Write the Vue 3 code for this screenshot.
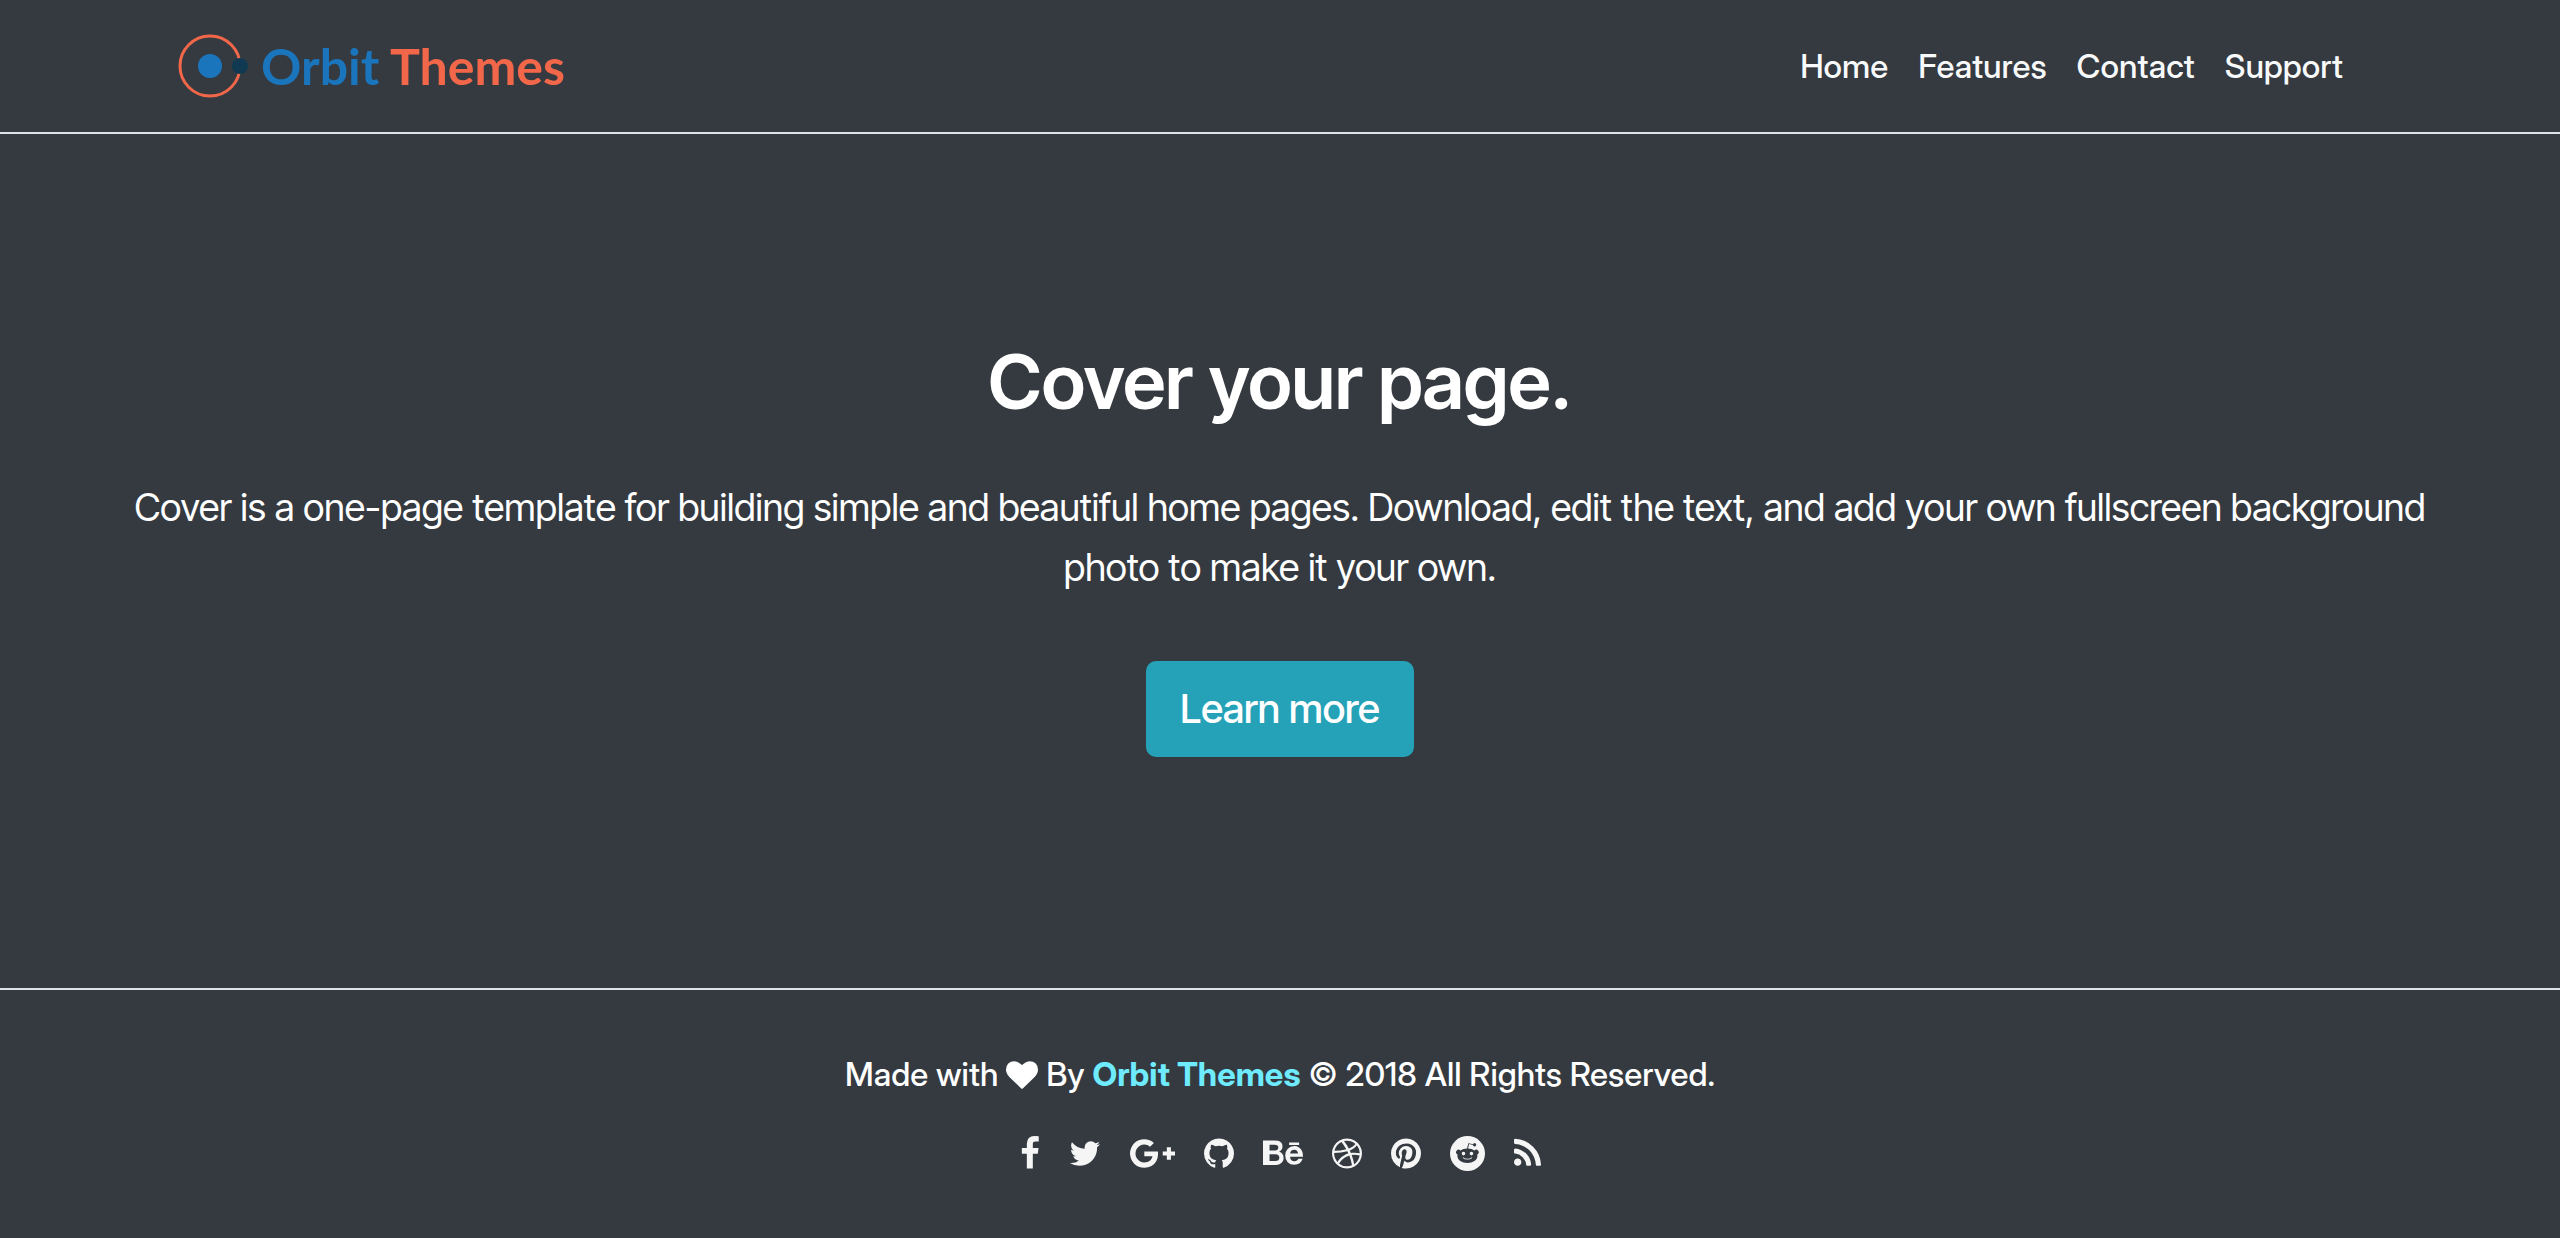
<script setup>
const links = ['Home', 'Features', 'Contact', 'Support']

const icons = [
  { name: 'Facebook', width: 20, box: '384 0 1024 1792', d: 'M1343 12v264h-157q-86 0-116 36t-30 108v189h293l-39 296h-254v759h-306v-759h-255v-296h255v-218q0-186 104-288.500t277-102.500q147 0 228 12z' },
  { name: 'Twitter', width: 32, box: '64 0 1664 1792', d: 'M1684 408q-67 98-162 167 1 14 1 42 0 130-38 259.500t-115.500 248.500-184.500 210.500-258 146-323 54.500q-271 0-496-145 35 4 78 4 225 0 401-138-105-2-188-64.500t-114-159.500q33 5 61 5 43 0 85-11-112-23-185.500-111.500t-73.500-205.500v-4q68 38 146 41-66-44-105-115t-39-154q0-88 44-163 121 149 294.500 238.500t371.500 99.500q-8-38-8-74 0-134 94.500-228.500t228.500-94.500q140 0 236 102 109-21 205-78-37 115-142 178 93-10 186-50z' },
  { name: 'Google Plus', width: 45, box: '0 0 2304 1792', d: 'M1437 913q0 208-87 370.500t-248 254-369 91.500q-149 0-285-58t-234-156-156-234-58-285 58-285 156-234 234-156 285-58q286 0 491 192l-199 191q-117-113-292-113-123 0-227.500 62t-165.500 168.500-61 232.500 61 232.500 165.500 168.500 227.500 62q83 0 152.500-23t114.500-57.500 78.500-78.500 49-83 21.500-74h-416v-252h692q12 63 12 122zm867-122v210h-209v209h-210v-209h-209v-210h209v-209h210v209h209z' },
  { name: 'GitHub', width: 30, box: '128 0 1536 1792', d: 'M896 128q209 0 385.500 103t279.500 279.500 103 385.500q0 251-146.500 451.500t-378.500 277.500q-27 5-40-7t-13-30q0-3 .5-76.500t.5-134.500q0-97-52-142 57-6 102.500-18t94-39 81-66.500 53-105 20.500-150.500q0-119-79-206 37-91-8-204-28-9-81 11t-92 44l-38 24q-93-26-192-26t-192 26q-16-11-42.500-27t-83.500-38.500-85-13.500q-45 113-8 204-79 87-79 206 0 85 20.500 150t52.500 105 80.500 67 94 39 102.500 18q-39 36-49 103-21 10-45 15t-57 5-65.500-21.500-55.500-62.500q-19-32-48.500-52t-49.500-24l-20-3q-21 0-29 4.500t-5 11.500 9 14 13 12l7 5q22 10 43.500 38t31.500 51l10 23q13 38 44 61.500t67 30 69.500 7 55.500-3.500l23-4q0 38 .5 88.500t.5 54.500q0 18-13 30t-40 7q-232-77-378.500-277.500t-146.500-451.500q0-209 103-385.500t279.500-279.500 385.500-103z' },
  { name: 'Behance', width: 40, box: '0 0 2048 1792', d: 'M1848 339h-511v124h511v-124zm-252 365q-90 0-146 52.500t-62 142.500h408q-18-195-200-195zm16 585q63 0 122-32t76-87h221q-100 307-427 307-214 0-340.500-132t-126.500-347q0-208 130.500-345.500t336.500-137.500q138 0 240.500 68t153 179 50.500 248q0 17-2 47h-658q0 111 57.500 171.500t166.500 60.500zm-1277-14h296q205 0 205-167 0-180-199-180h-302v347zm0-537h281q78 0 123.500-36.500t45.500-113.500q0-144-190-144h-260v294zm-335-509h594q87 0 155 14t126.500 47.500 90 96.500 31.500 154q0 181-172 263 114 32 172 115t58 204q0 75-24.500 136.500t-66 103.500-98.500 71-121 42-134 13h-611v-1260z' },
  { name: 'Dribbble', width: 30, box: '128 0 1536 1792', d: 'M1152 1500q-42-241-140-498h-2l-2 1q-16 6-43 16.500t-101 49-137 82-131 114.500-103 148l-15-11q184 150 418 150 132 0 256-52zm-185-607q-21-49-53-111-311 93-673 93-1 7-1 21 0 124 44 236.500t124 201.500q50-89 123.500-166.500t142.500-124.500 130.500-81 99.500-48l37-13q4-1 13-3.500t13-4.500zm-107-212q-120-213-244-378-138 65-234 186t-128 272q302 0 606-80zm684 319q-210-60-409-29 87 239 128 469 111-75 185-189.500t96-250.500zm-805-741q-1 0-2 1 1-1 2-1zm590 145q-185-164-433-164-76 0-155 19 131 170 246 382 69-26 130-60.500t96.500-61.500 65.500-57 37.500-40.500zm223 485q-3-232-149-410l-1 1q-9 12-19 24.500t-43.500 44.500-71 60.500-100 65-131.500 64.500q25 53 44 95 2 6 6.500 17.500t7.500 16.500q36-5 74.500-7t73.500-2 69 1.500 64 4 56.500 5.500 48 6.500 36.500 6 25 4.500zm112 7q0 209-103 385.500t-279.500 279.500-385.500 103-385.500-103-279.500-279.500-103-385.500 103-385.500 279.500-279.500 385.500-103 385.500 103 279.500 279.500 103 385.500z' },
  { name: 'Pinterest', width: 30, box: '128 0 1536 1792', d: 'M1664 896q0 209-103 385.500t-279.500 279.500-385.500 103q-111 0-218-32 59-93 78-164 9-34 54-211 20 39 73 67.500t114 28.500q121 0 216-68.500t147-188.500 52-270q0-114-59.500-214t-172.500-163-255-63q-105 0-196 29t-154.500 77-109 110.500-67 129.500-21.500 134q0 104 40 183t117 111q30 12 38-20 2-7 8-31t8-30q6-23-11-43-51-61-51-151 0-151 104.500-259.500t273.500-108.500q151 0 235.500 82t84.500 213q0 170-68.500 289t-175.500 119q-61 0-98-43.500t-23-104.500q8-35 26.500-93.500t30-103 11.500-75.500q0-50-27-83t-77-33q-62 0-105 57t-43 142q0 73 25 122l-99 418q-17 70-13 177-206-91-333-281t-127-423q0-209 103-385.500t279.500-279.500 385.500-103 385.500 103 279.500 279.500 103 385.500z' },
  { name: 'Reddit', width: 35, box: '0 0 1792 1792', d: 'M896 0a896 896 0 1 0 0 1792a896 896 0 1 0 0-1792zM925 645l50-232 200 45a84 84 0 1 0 6-42l-222-50q-20-4-25 16l-60 263q-200 6-345 98a124 124 0 1 0-142 198q-10 36-10 76c0 220 230 370 514 370s514-150 514-370q0-40-10-76a124 124 0 1 0-142-198q-130-88-328-98zM690 810a92 92 0 1 1 0 184a92 92 0 1 1 0-184zM1098 810a92 92 0 1 1 0 184a92 92 0 1 1 0-184zM690 1096q70 66 204 66t204-66q16-12 30 2t0 30q-86 80-234 80t-234-80q-14-16 0-30t30-2z' },
  { name: 'RSS', width: 27, box: '192 0 1408 1792', d: 'M576 1344q0 80-56 136t-136 56-136-56-56-136 56-136 136-56 136 56 56 136zm512 123q2 28-17 48-18 21-47 21h-135q-25 0-43-16.500t-20-41.500q-22-229-184.500-391.500t-391.500-184.500q-25-2-41.500-20t-16.500-43v-135q0-29 21-47 17-17 43-17h5q160 13 306 80.500t259 181.500q114 113 181.500 259t80.500 306zm512 2q2 27-18 47-18 20-46 20h-143q-26 0-44.500-17.500t-19.500-42.500q-12-215-101-408.500t-231.500-336-336-231.500-408.500-102q-25-1-42.500-19.500t-17.500-43.500v-143q0-28 20-46 18-18 44-18h3q262 13 501.500 120t425.500 294q187 186 294 425.500t120 501.500z' }
]
</script>

<template>
  <div class="page">
    <header class="header">
      <nav class="container navbar">
        <a class="brand" href="#">
          <svg class="brand-mark" width="72" height="66" viewBox="0 0 72 66" aria-hidden="true">
            <circle cx="32" cy="33" r="30" fill="none" stroke="#f26749" stroke-width="3" />
            <circle cx="32" cy="33" r="12" fill="#1b75bc" />
            <circle cx="62" cy="33" r="8" fill="#103a52" />
          </svg>
          <span class="brand-name"><span class="brand-orbit">Orbit</span> Themes</span>
        </a>
        <ul class="nav">
          <li v-for="link in links" :key="link"><a class="nav-link" href="#">{{ link }}</a></li>
        </ul>
      </nav>
    </header>

    <main class="cover">
      <h1 class="title">Cover your page.</h1>
      <p class="lead">Cover is a one-page template for building simple and beautiful home pages. Download, edit the text, and add your own fullscreen background photo to make it your own.</p>
      <button class="button" type="button">Learn more</button>
    </main>

    <footer class="footer">
      <p class="credit">
        Made with
        <svg class="heart" width="32" height="32" viewBox="0 0 1792 1792" role="img" aria-label="love">
          <path d="M896 1664q-26 0-44-18l-624-602q-10-8-27.500-26t-55.500-65.500-68-97.500-53.500-121-23.500-138q0-220 127-344t351-124q62 0 126.500 21.500t120 58 95.500 68.500 76 68q36-36 76-68t95.500-68.500 120-58 126.500-21.500q224 0 351 124t127 344q0 221-229 450l-623 600q-18 18-44 18z" />
        </svg>
        By <a class="credit-link" href="#">Orbit Themes</a> © 2018 All Rights Reserved.
      </p>
      <ul class="social">
        <li v-for="icon in icons" :key="icon.name">
          <a class="social-link" href="#" :aria-label="icon.name">
            <svg :width="icon.width" height="35" :viewBox="icon.box" fill-rule="evenodd"><path :d="icon.d" /></svg>
          </a>
        </li>
      </ul>
    </footer>
  </div>
</template>

<style>
body {
  margin: 0;
  background: #343a40;
}
</style>

<style scoped>
.page {
  display: flex;
  flex-direction: column;
  min-height: 100vh;
  color: #fff;
  background: #343a40;
  font-family: "Inter Display", Inter, "Liberation Sans", sans-serif;
  font-size: 33px;
  line-height: 48px;
}

.header {
  border-bottom: 2px solid #dee2e6;
}

.container {
  box-sizing: border-box;
  width: 100%;
  max-width: 2280px;
  margin: 0 auto;
  padding: 0 38px;
}

.navbar {
  display: flex;
  align-items: center;
  justify-content: space-between;
  height: 132px;
}

.brand {
  display: flex;
  align-items: center;
  gap: 11px;
  color: #f26749;
  text-decoration: none;
}

.brand-mark {
  display: block;
}

.brand-name {
  font-family: Lato, sans-serif;
  font-size: 50px;
  font-weight: 700;
}

.brand-orbit {
  color: #1b75bc;
}

.nav,
.social {
  display: flex;
  margin: 0;
  padding: 0;
  list-style: none;
}

.nav {
  margin-right: 24px;
}

.nav-link {
  display: block;
  padding: 16px 15px;
  color: #f8f9fa;
  font-weight: 500;
  text-decoration: none;
}

.cover {
  flex: 1;
  display: flex;
  flex-direction: column;
  align-items: center;
  justify-content: center;
  padding: 0 128px 32px;
  text-align: center;
}

.title {
  margin: 0 0 48px;
  font-family: "Inter Tight", Inter, sans-serif;
  font-size: 76px;
  font-weight: 600;
  line-height: 96px;
}

.lead {
  margin: 0 0 64px;
  font-family: "Inter Tight", Inter, sans-serif;
  font-size: 38px;
  font-weight: 400;
  line-height: 60px;
}

.button {
  padding: 16px 32px;
  border: 2px solid #26a2b8;
  border-radius: 10px;
  color: #fff;
  background: #26a2b8;
  font: 500 40px/60px "Inter Tight", Inter, sans-serif;
}

.footer {
  display: flex;
  flex-direction: column;
  align-items: center;
  padding: 60px 32px 67px;
  border-top: 2px solid #dee2e6;
}

.credit {
  margin: 0 0 38px;
  font-weight: 500;
}

.heart {
  vertical-align: -5px;
  fill: #fff;
}

.credit-link {
  color: #6eebff;
  font-weight: 700;
  text-decoration: none;
}

.social {
  gap: 29px;
}

.social-link {
  display: block;
}

.social-link svg {
  display: block;
  fill: #f5f5f5;
}
</style>
